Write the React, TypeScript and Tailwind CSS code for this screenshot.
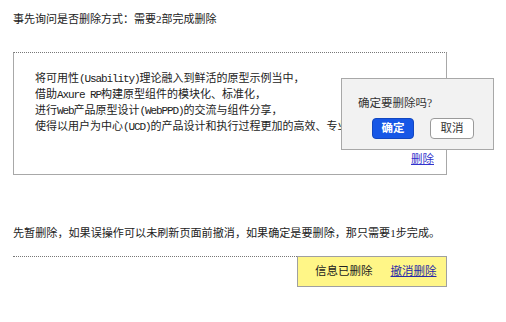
import React from "react";

const font = "font-['Liberation_Serif','Noto_Sans_CJK_SC',serif]";

// half-width latin runs, like the song-style font in the picture
const Latin: React.FC<{ children: React.ReactNode }> = ({ children }) => (
  <span className="font-['Liberation_Mono',monospace] tracking-[-1.1px]">{children}</span>
);

const ConfirmDialog: React.FC = () => (
  <div className="absolute left-[327px] top-[25px] w-[153px] h-[72px] bg-[#f2f2f2] border border-[#a8a8a8] pl-[16px] pt-[16px]">
    <p className="text-[11.5px] leading-[16px] text-[#333]">确定要删除吗?</p>
    <div className="flex gap-[16px] mt-[7px] pl-[14px]">
      <button className="w-[42px] h-[21px] rounded-[4px] bg-[#1757e6] border border-[#1247c0] text-white text-[11.5px] leading-none font-bold">
        确定
      </button>
      <button className="w-[44px] h-[21px] rounded-[4px] bg-white border border-[#9a9a9a] text-[#333] text-[11.5px] leading-none">
        取消
      </button>
    </div>
  </div>
);

export default function App() {
  return (
    <div className={`w-[506px] h-[322px] bg-white text-[#222] pl-[13px] ${font}`}>
      <p className="pt-[11px] text-[11px] leading-[16px]">
        事先询问是否删除方式：需要2部完成删除
      </p>

      <div className="relative mt-[25px] w-[434px] h-[123px] flex flex-col border border-[#a8a8a8] border-t-[#777] [border-top-style:dotted]">
        <div className="pl-[21px] pt-[18px] text-[11px] leading-[15px]">
          <p>将可用性<Latin>(Usability)</Latin>理论融入到鲜活的原型示例当中，</p>
          <p>借助<Latin>Axure RP</Latin>构建原型组件的模块化、标准化，</p>
          <p>进行<Latin>Web</Latin>产品原型设计<Latin>(WebPPD)</Latin>的交流与组件分享，</p>
          <p className="whitespace-nowrap">使得以用户为中心<Latin>(UCD)</Latin>的产品设计和执行过程更加的高效、专业</p>
        </div>
        <a className="mt-auto self-end mr-[12px] mb-[7px] text-[11.5px] leading-[16px] text-[#3333cc] underline">
          删除
        </a>
        <ConfirmDialog />
      </div>

      <p className="mt-[50px] text-[11.1px] leading-[16px]">
        先暂删除，如果误操作可以未刷新页面前撤消，如果确定是要删除，那只需要1步完成。
      </p>

      <div className="mt-[15px] w-[434px] flex justify-end border-t border-[#777] [border-top-style:dotted]">
        <div className="-mt-px w-[150px] h-[31px] bg-[#fff687] border border-[#a0a0a0] flex items-center pl-[17px] gap-[18px] text-[11.5px]">
          <span>信息已删除</span>
          <a className="text-[#2a2aa8] underline">撤消删除</a>
        </div>
      </div>
    </div>
  );
}
